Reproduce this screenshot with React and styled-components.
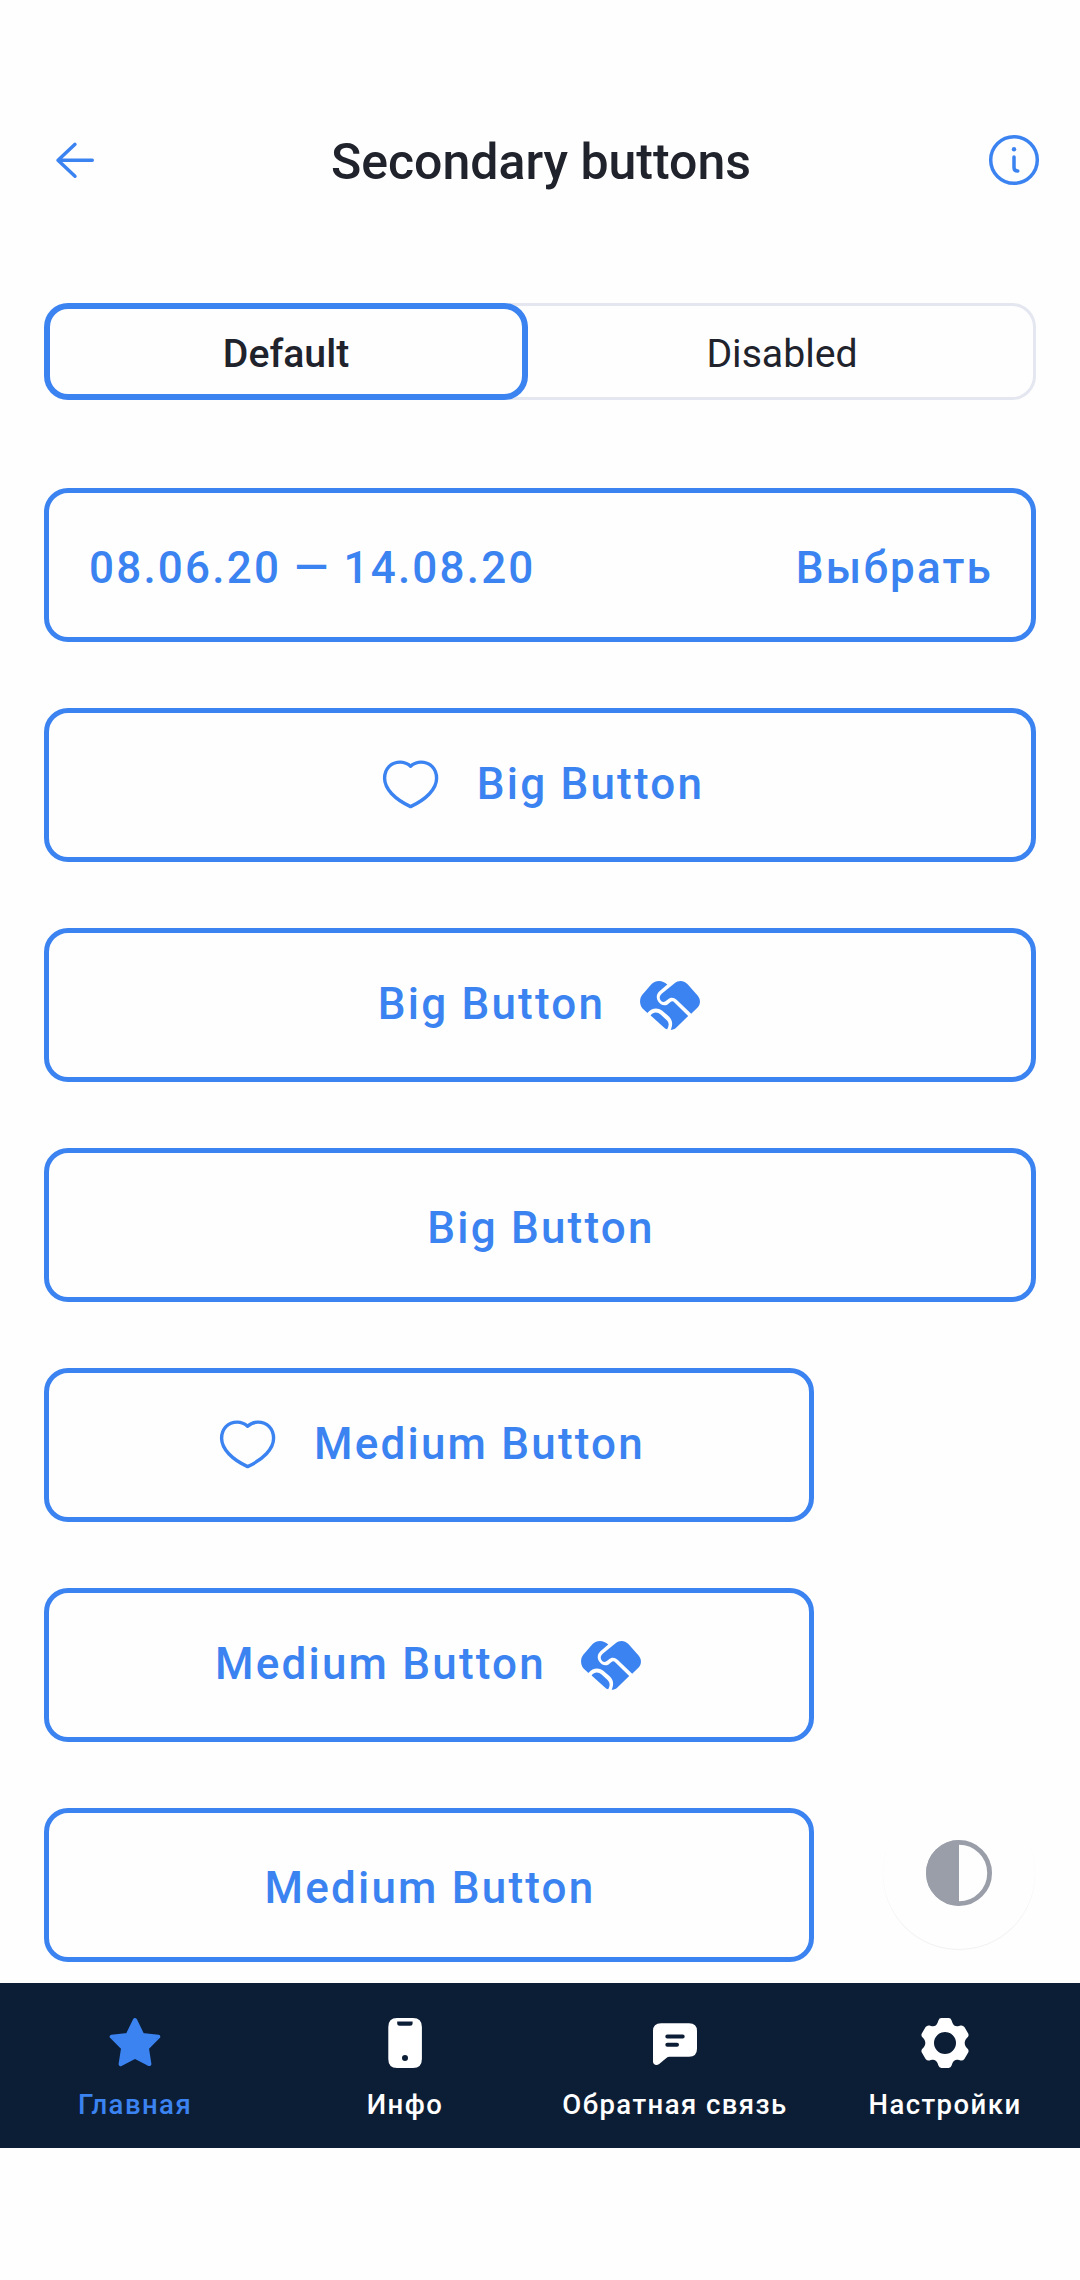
import React from "react";
import styled, { createGlobalStyle } from "styled-components";

const blue = "#3b83f1";
const ink = "#20222c";

const GlobalStyle = createGlobalStyle`
  * { box-sizing: border-box; }
  body { margin: 0; background: #fefefe; }
  button { font: inherit; color: inherit; background: none; border: 0; padding: 0; margin: 0; }
`;

const Screen = styled.div`
  width: 1080px;
  height: 2280px;
  display: flex;
  flex-direction: column;
  overflow: hidden;
  background: #fefefe;
  color: ${ink};
  font-family: Roboto, "Noto Sans", sans-serif;
`;

const Header = styled.header`
  flex: none;
  margin-top: 105px;
  height: 110px;
  padding: 0 33px 0 42px;
  display: grid;
  grid-template-columns: 66px 1fr 66px;
  align-items: center;
`;

const IconButton = styled.button`
  width: 66px;
  height: 66px;
`;

const Icon = styled.svg`
  display: block;
  flex: none;
  width: 66px;
  height: 66px;
`;

const Title = styled.h1`
  margin: 0 0 0 -7px;
  padding: 4px 0 0;
  font-size: 50px;
  line-height: 60px;
  font-weight: 500;
  text-align: center;
`;

const Tabs = styled.div`
  flex: none;
  margin: 88px 44px 0;
  height: 97px;
  display: flex;
  border-radius: 24px;
  box-shadow: inset 0 0 0 3px #e4e7f0;
`;

const Tab = styled.button`
  flex: ${(p) => (p.$active ? "0 0 484px" : "1")};
  padding-top: 4px;
  border-radius: 24px;
  box-shadow: ${(p) => (p.$active ? `inset 0 0 0 6px ${blue}` : "none")};
  background: ${(p) => (p.$active ? "#fefefe" : "transparent")};
  font-size: 39.2px;
  line-height: 46px;
  font-weight: ${(p) => (p.$active ? 500 : 400)};
`;

const Content = styled.main`
  flex: 1;
  min-height: 0;
  padding: 88px 44px 0;
  display: flex;
  flex-direction: column;
  gap: 66px;
  overflow: hidden;
`;

const Outlined = styled.button`
  flex: none;
  width: ${(p) => (p.$medium ? "770px" : "100%")};
  height: 154px;
  padding: 0 39px;
  border: 5px solid ${blue};
  border-radius: 24px;
  display: flex;
  align-items: center;
  justify-content: ${(p) => (p.$spread ? "space-between" : "center")};
  gap: 33px;
  color: ${blue};
`;

const Label = styled.span`
  margin: 0 -1px 0 1px;
  padding: ${(p) => (p.$beside ? "0 0 2px" : "6px 0 0")};
  font-size: 44px;
  line-height: 52px;
  font-weight: 500;
  letter-spacing: 0.05em;
  white-space: nowrap;
`;

const Fab = styled.button`
  position: absolute;
  left: 883px;
  top: 1797px;
  width: 152px;
  height: 152px;
  border-radius: 50%;
  background: #fefefe;
  box-shadow: 0 1px 1px rgba(0, 0, 0, 0.06);
  display: flex;
  align-items: center;
  justify-content: center;
`;

const NavBar = styled.nav`
  flex: none;
  height: 165px;
  margin-bottom: 132px;
  display: grid;
  grid-template-columns: repeat(4, 1fr);
  background: #0c1e36;
`;

const NavItem = styled.button`
  padding-top: 27px;
  display: flex;
  flex-direction: column;
  align-items: center;
  gap: 13px;
  color: ${(p) => (p.$active ? blue : "#ffffff")};
`;

const NavLabel = styled.span`
  font-size: 27.5px;
  line-height: 32px;
  font-weight: 500;
  letter-spacing: 1.45px;
  white-space: nowrap;
`;

const BackIcon = () => (
  <Icon viewBox="0 0 66 66" fill="none" stroke={blue} strokeWidth="3.4" strokeLinecap="round" strokeLinejoin="round">
    <path d="M50.3 33.3H16M33 17.3L16 33.3L33 49.3" />
  </Icon>
);

const InfoIcon = () => (
  <Icon viewBox="0 0 66 66" fill="none" stroke={blue} strokeWidth="3.5" strokeLinecap="round">
    <circle cx="33" cy="33" r="23.3" />
    <circle cx="33" cy="22.2" r="2.2" fill={blue} stroke="none" />
    <path d="M33 30V40.5Q33 44 36.8 44" />
  </Icon>
);

const HeartIcon = () => (
  <Icon viewBox="-0.6 -0.3 66 66" fill="none" stroke="currentColor" strokeWidth="3.4" strokeLinecap="round" strokeLinejoin="round">
    <path d="M33 14C30 11.2 26.6 9.8 22.6 9.8C13.4 9.8 7 16.6 7 26C7 36.6 17.4 47.2 33 54.3C48.6 47.2 59 36.6 59 26C59 16.6 52.6 9.8 43.4 9.8C39.4 9.8 36 11.2 33 14Z" />
  </Icon>
);

const HandshakeIcon = () => (
  <Icon viewBox="0 0 66 66" fill="currentColor">
    <path d="M30.3 12.6C25.6 7.9 19 7.7 14.6 12L5.3 22.7C2.3 26.3 2.3 32.4 5.3 36.2L10.4 41C14.6 35.6 20.7 35.3 25 38.4L31.4 44C35.5 47.8 36.2 52 33.7 57.8C35.6 57.8 37.5 57.2 39.4 55.4L51.2 44L37.4 30.4C36.2 29 34.6 29 33.2 30.2L30.6 32.4C27 34.4 23.4 32.8 21.2 29.6C18.8 26 19.4 22.2 22.4 19.3Z" />
    <path d="M25 21.6L37.6 11.2C41.6 7.9 46.6 8.2 50.4 12L60.6 23.4C63.7 27.2 63.8 32 60.6 35.6L54.2 41.8L39.6 27.8C36.8 25 33.4 25 30.8 27.4L28.4 29.3C26.6 30.5 24.6 30 23.4 28C22 25.6 22.8 23.4 25 21.6Z" />
    <path d="M13.6 43.4C16.4 39.8 20.6 39.8 23.6 42.6L29.8 48.2C32.2 50.6 32.2 53.8 30.2 57.3C28.6 57 27.6 56.2 26.4 55.1Z" />
  </Icon>
);

const ContrastIcon = () => (
  <Icon viewBox="0 0 66 66">
    <circle cx="33" cy="33" r="30.6" fill="none" stroke="#9a9ea9" strokeWidth="4.8" />
    <path d="M33 0.2A32.8 32.8 0 0 0 33 65.8Z" fill="#9a9ea9" />
  </Icon>
);

const StarIcon = () => (
  <Icon viewBox="0 0 66 66" fill="currentColor" stroke="currentColor" strokeWidth="4" strokeLinejoin="round">
    <path d="M33 10L40.3 24.9L56.3 26.7L44.9 38L47.4 54.1L33 46.8L18.6 54.1L21.1 38L9.7 26.7L25.7 24.9Z" />
  </Icon>
);

const PhoneIcon = () => (
  <Icon viewBox="0 0 66 66" fill="currentColor" fillRule="evenodd">
    <path d="M25 8H41Q49.9 8 49.9 17V49Q49.9 58 41 58H25Q16.3 58 16.3 49V17Q16.3 8 25 8ZM25.2 11.5V13.3Q25.2 15.8 27.7 15.8H38Q40.6 15.8 40.6 13.3V11.5ZM33 45A3 3 0 1 0 33 51A3 3 0 1 0 33 45Z" />
  </Icon>
);

const ChatIcon = () => (
  <Icon viewBox="0 0 66 66">
    <path fill="currentColor" d="M19 13.2H47Q55 13.2 55 21V38.8Q55 46.8 47 46.8H27.5Q25.8 46.8 24.4 48L17.2 54C14.6 56.2 11 54.9 11 51.6V21Q11 13.2 19 13.2Z" />
    <path d="M25.3 26.4H40.7M25.3 34.7H35" stroke="#0c1e36" strokeWidth="4" strokeLinecap="round" />
  </Icon>
);

const GearIcon = () => (
  <Icon viewBox="-33 -33 66 66" fill="currentColor" fillRule="evenodd">
    <path d="M-3.6 -25H3.6Q5.8 -25 6.6 -22.6L7.4 -20.2C8.6 -17.2 10.9 -16 14 -17L15.6 -17.4Q17.8 -17.9 19.4 -15.9L23.2 -9.6Q24.2 -7.4 22.6 -5.8L21 -4C19.2 -1.6 19.2 1.6 21 4L22.6 5.8Q24.2 7.4 23.2 9.6L19.4 15.9Q17.8 17.9 15.6 17.4L14 17C10.9 16 8.6 17.2 7.4 20.2L6.6 22.6Q5.8 25 3.6 25H-3.6Q-5.8 25 -6.6 22.6L-7.4 20.2C-8.6 17.2 -10.9 16 -14 17L-15.6 17.4Q-17.8 17.9 -19.4 15.9L-23.2 9.6Q-24.2 7.4 -22.6 5.8L-21 4C-19.2 1.6 -19.2 -1.6 -21 -4L-22.6 -5.8Q-24.2 -7.4 -23.2 -9.6L-19.4 -15.9Q-17.8 -17.9 -15.6 -17.4L-14 -17C-10.9 -16 -8.6 -17.2 -7.4 -20.2L-6.6 -22.6Q-5.8 -25 -3.6 -25ZM0 -11A11 11 0 1 0 0 11A11 11 0 1 0 0 -11Z" />
  </Icon>
);

const buttonRows = [
  { text: "Big Button", left: HeartIcon },
  { text: "Big Button", right: HandshakeIcon },
  { text: "Big Button" },
  { text: "Medium Button", left: HeartIcon, medium: true },
  { text: "Medium Button", right: HandshakeIcon, medium: true },
  { text: "Medium Button", medium: true },
];

const navItems = [
  { text: "Главная", Glyph: StarIcon, active: true },
  { text: "Инфо", Glyph: PhoneIcon },
  { text: "Обратная связь", Glyph: ChatIcon },
  { text: "Настройки", Glyph: GearIcon },
];

export default function App() {
  return (
    <Screen>
      <GlobalStyle />
      <Header>
        <IconButton><BackIcon /></IconButton>
        <Title>Secondary buttons</Title>
        <IconButton><InfoIcon /></IconButton>
      </Header>
      <Tabs>
        <Tab $active>Default</Tab>
        <Tab>Disabled</Tab>
      </Tabs>
      <Content>
        <Outlined $spread>
          <Label>08.06.20 — 14.08.20</Label>
          <Label>Выбрать</Label>
        </Outlined>
        {buttonRows.map(({ text, left: Left, right: Right, medium }, i) => (
          <Outlined key={i} $medium={medium}>
            {Left && <Left />}
            <Label $beside={Boolean(Left || Right)}>{text}</Label>
            {Right && <Right />}
          </Outlined>
        ))}
      </Content>
      <NavBar>
        {navItems.map(({ text, Glyph, active }) => (
          <NavItem key={text} $active={active}>
            <Glyph />
            <NavLabel>{text}</NavLabel>
          </NavItem>
        ))}
      </NavBar>
      <Fab><ContrastIcon /></Fab>
    </Screen>
  );
}
